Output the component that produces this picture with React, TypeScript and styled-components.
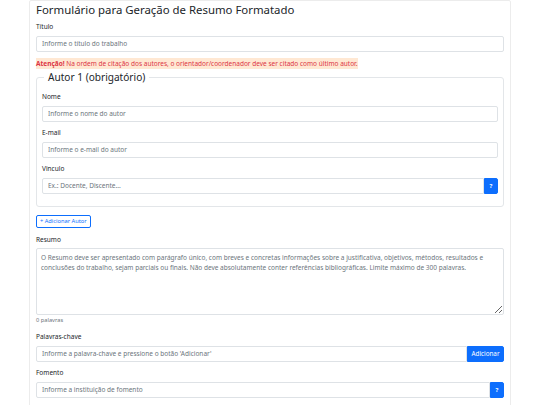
import React from "react";
import styled, { createGlobalStyle } from "styled-components";

const GlobalStyle = createGlobalStyle`
  html, body {
    margin: 0;
    padding: 0;
    background: #fff;
  }
  body {
    font-family: "Noto Sans", "Open Sans", sans-serif;
    font-size: 6.5px;
    color: #212529;
  }
  * {
    box-sizing: border-box;
  }
`;

const Page = styled.div`
  width: 482px;
  margin: 0 auto;
  padding: 1px 6px 8px;
  border: 1px solid #ececec;
  border-radius: 2px;
`;

const Title = styled.h1`
  margin: 0 0 5px;
  font-size: 11.4px;
  line-height: 15px;
  font-weight: 400;
`;

const Group = styled.div`
  margin-bottom: 6.5px;
`;

const Label = styled.label`
  display: block;
  font-size: 6.5px;
  line-height: 10px;
  font-weight: 400;
  margin-bottom: 3.6px;
`;

const InputRow = styled.div`
  display: flex;
`;

const Input = styled.input<{ $joined?: boolean }>`
  display: block;
  flex: 1;
  width: 100%;
  min-width: 0;
  height: 16px;
  margin: 0;
  padding: 0 5px;
  font-family: inherit;
  font-size: 6.5px;
  color: #212529;
  background: #fff;
  border: 1px solid #dee2e6;
  border-radius: ${p => (p.$joined ? "2px 0 0 2px" : "2px")};
  outline: none;

  &::placeholder {
    color: #6c757d;
  }
`;

const Addon = styled.button<{ $wide?: boolean }>`
  flex: none;
  height: 16px;
  width: ${p => (p.$wide ? "37px" : "14px")};
  margin: 0;
  padding: 0;
  font-family: inherit;
  font-size: ${p => (p.$wide ? "6.3px" : "6px")};
  font-weight: ${p => (p.$wide ? 400 : 700)};
  color: #fff;
  background: #0d6efd;
  border: 1px solid #0d6efd;
  border-radius: 0 2px 2px 0;
`;

const Notice = styled.div`
  margin-bottom: 2px;
  line-height: 11px;
`;

const NoticeText = styled.span`
  display: inline-block;
  font-size: 6.5px;
  line-height: 11px;
  color: #dc3545;
  background: #ffe8d3;

  strong {
    font-weight: 700;
  }
`;

const Fieldset = styled.fieldset`
  margin: 0 0 7.5px;
  padding: 8px 5px 6px;
  border: 1px solid #e3e6e9;
  border-radius: 3px;
`;

const Legend = styled.legend`
  margin-left: 2px;
  padding: 0 4px;
  font-size: 10.1px;
  line-height: 13px;
  font-weight: 400;
`;

const OutlineButton = styled.button`
  display: block;
  height: 13px;
  margin: 0 0 7px;
  padding: 0 3px;
  font-family: inherit;
  font-size: 5.7px;
  color: #0d6efd;
  background: #fff;
  border: 1px solid #0d6efd;
  border-radius: 2px;
`;

const TextArea = styled.textarea`
  display: block;
  width: 100%;
  height: 67px;
  margin: 0;
  padding: 4px 4px 3px;
  font-family: inherit;
  font-size: 6.5px;
  line-height: 9.5px;
  color: #212529;
  border: 1px solid #dee2e6;
  border-radius: 2px;
  resize: vertical;
  outline: none;

  &::placeholder {
    color: #6c757d;
  }
`;

const Help = styled.div`
  margin: 1px 0 2px;
  font-size: 5.7px;
  line-height: 9px;
  color: #6c757d;
`;

export default function App() {
  return (
    <>
      <GlobalStyle />
      <Page>
        <Title>Formulário para Geração de Resumo Formatado</Title>

        <Group>
          <Label>Título</Label>
          <Input placeholder="Informe o título do trabalho" />
        </Group>

        <Notice>
          <NoticeText>
            <strong>Atenção!</strong> Na ordem de citação dos autores, o orientador/coordenador deve ser citado como último autor.
          </NoticeText>
        </Notice>

        <Fieldset>
          <Legend>Autor 1 (obrigatório)</Legend>
          <Group>
            <Label>Nome</Label>
            <Input placeholder="Informe o nome do autor" />
          </Group>
          <Group>
            <Label>E-mail</Label>
            <Input placeholder="Informe o e-mail do autor" />
          </Group>
          <Group>
            <Label>Vinculo</Label>
            <InputRow>
              <Input $joined placeholder="Ex.: Docente, Discente..." />
              <Addon>?</Addon>
            </InputRow>
          </Group>
        </Fieldset>

        <OutlineButton>+ Adicionar Autor</OutlineButton>

        <Group>
          <Label>Resumo</Label>
          <TextArea placeholder="O Resumo deve ser apresentado com parágrafo único, com breves e concretas informações sobre a justificativa, objetivos, métodos, resultados e conclusões do trabalho, sejam parciais ou finais. Não deve absolutamente conter referências bibliográficas. Limite máximo de 300 palavras." />
          <Help>0 palavras</Help>
        </Group>

        <Group>
          <Label>Palavras-chave</Label>
          <InputRow>
            <Input $joined placeholder="Informe a palavra-chave e pressione o botão 'Adicionar'" />
            <Addon $wide>Adicionar</Addon>
          </InputRow>
        </Group>

        <Group>
          <Label>Fomento</Label>
          <InputRow>
            <Input $joined placeholder="Informe a instituição de fomento" />
            <Addon>?</Addon>
          </InputRow>
        </Group>
      </Page>
    </>
  );
}
